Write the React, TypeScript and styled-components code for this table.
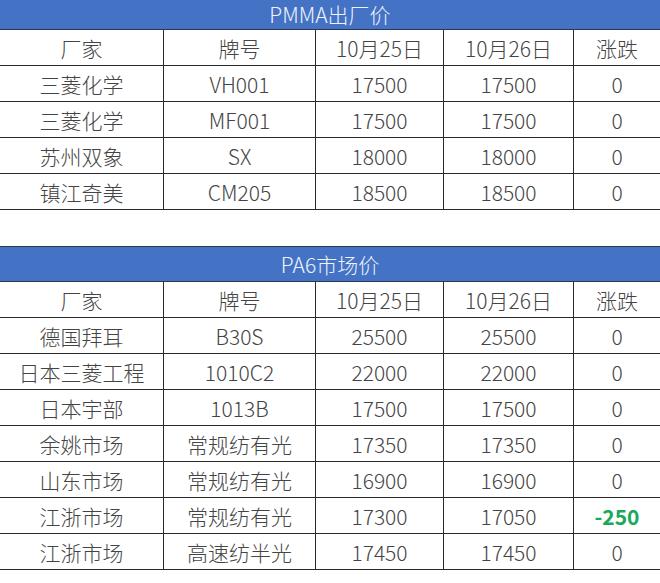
import React from "react";
import styled, { createGlobalStyle } from "styled-components";

const Global = createGlobalStyle`
  html, body { margin: 0; padding: 0; background: #ffffff; }
  body { font-family: "Noto Sans CJK SC", "Noto Sans", sans-serif; }
`;

const Page = styled.div`
  width: 660px;
  display: flex;
  flex-direction: column;
`;

const Table = styled.section<{ $gap?: boolean }>`
  display: flex;
  flex-direction: column;
  margin-top: ${(p) => (p.$gap ? "36px" : "0")};
`;

const Title = styled.div<{ $h: number; $top?: boolean }>`
  box-sizing: border-box;
  height: ${(p) => p.$h}px;
  background: #4472c4;
  color: #eef3fb;
  font-size: 21px;
  font-weight: 300;
  display: flex;
  align-items: center;
  justify-content: center;
  border-bottom: 1px solid #2b3850;
  border-top: ${(p) => (p.$top ? "1px solid #2b3850" : "none")};
  line-height: 1;
`;

const Row = styled.div`
  box-sizing: border-box;
  height: 36px;
  display: grid;
  grid-template-columns: 163px 152px 128px 130px 87px;
  border-bottom: 1px solid #2a2a2a;
`;

const Cell = styled.div<{ $down?: boolean }>`
  display: flex;
  align-items: center;
  justify-content: center;
  font-size: 21px;
  line-height: 1;
  color: ${(p) => (p.$down ? "#1aa85a" : "#444444")};
  font-weight: ${(p) => (p.$down ? 700 : 300)};
  padding-top: 2px;
  & + & {
    border-left: 1px solid #2a2a2a;
  }
`;

const header = ["厂家", "牌号", "10月25日", "10月26日", "涨跌"];

const pmma = [
  ["三菱化学", "VH001", "17500", "17500", "0"],
  ["三菱化学", "MF001", "17500", "17500", "0"],
  ["苏州双象", "SX", "18000", "18000", "0"],
  ["镇江奇美", "CM205", "18500", "18500", "0"],
];

const pa6 = [
  ["德国拜耳", "B30S", "25500", "25500", "0"],
  ["日本三菱工程", "1010C2", "22000", "22000", "0"],
  ["日本宇部", "1013B", "17500", "17500", "0"],
  ["余姚市场", "常规纺有光", "17350", "17350", "0"],
  ["山东市场", "常规纺有光", "16900", "16900", "0"],
  ["江浙市场", "常规纺有光", "17300", "17050", "-250"],
  ["江浙市场", "高速纺半光", "17450", "17450", "0"],
];

const Rows = ({ data }: { data: string[][] }) => (
  <>
    <Row>
      {header.map((h) => (
        <Cell key={h}>{h}</Cell>
      ))}
    </Row>
    {data.map((r, i) => (
      <Row key={i}>
        {r.map((c, j) => (
          <Cell key={j} $down={j === 4 && c.startsWith("-")}>
            {c}
          </Cell>
        ))}
      </Row>
    ))}
  </>
);

export default function App() {
  return (
    <Page>
      <Global />
      <Table>
        <Title $h={30}>PMMA出厂价</Title>
        <Rows data={pmma} />
      </Table>
      <Table $gap>
        <Title $h={36} $top>
          PA6市场价
        </Title>
        <Rows data={pa6} />
      </Table>
    </Page>
  );
}
